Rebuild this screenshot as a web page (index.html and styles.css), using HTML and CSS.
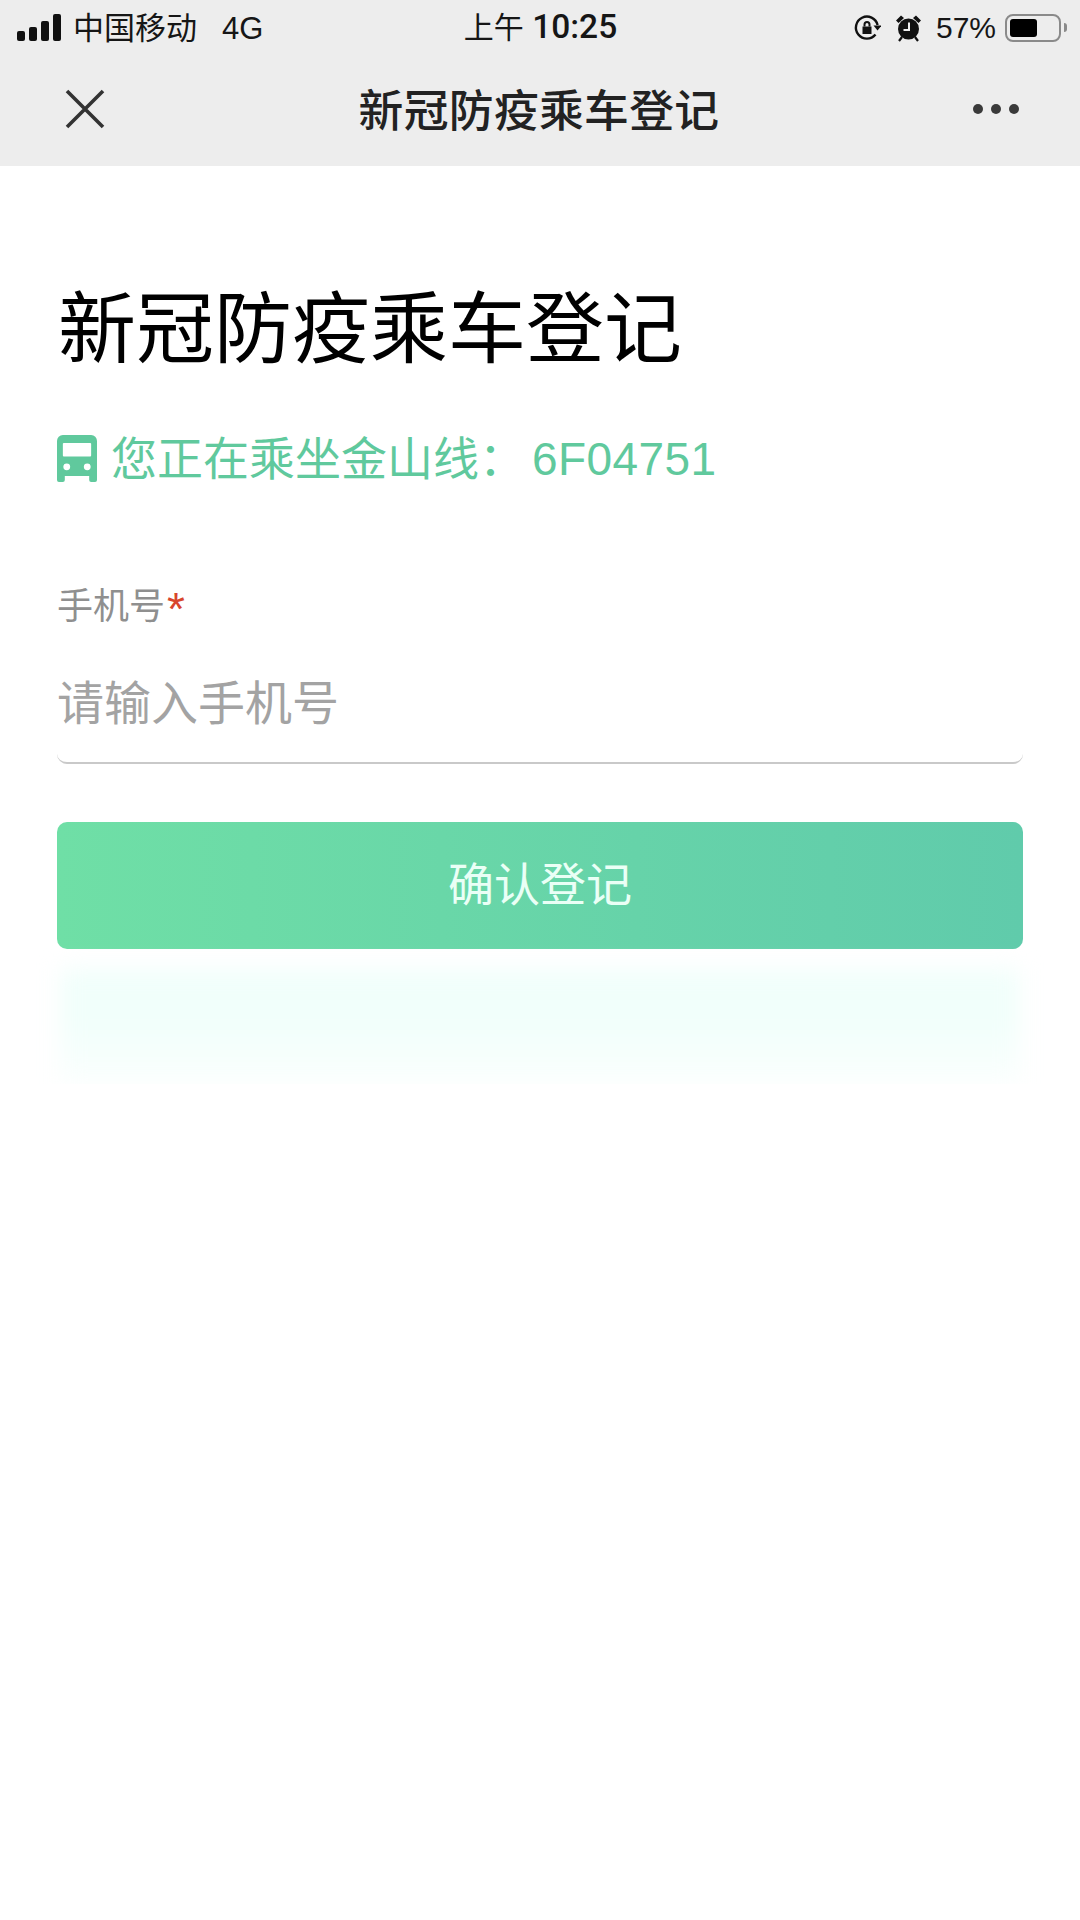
FILE: index.html
```html
<!DOCTYPE html>
<html lang="zh-CN">
<head>
  <meta charset="UTF-8">
  <meta name="viewport" content="width=device-width, initial-scale=1">
  <title>新冠防疫乘车登记</title>
  <link rel="stylesheet" href="styles.css">
</head>
<body>
  <header class="top">
    <div class="status">
      <div class="status-left">
        <div class="signal"><i></i><i></i><i></i><i></i></div>
        <div class="carrier">中国移动<span class="net">4G</span></div>
      </div>
      <div class="time">上午 <span class="clock">10:25</span></div>
      <div class="status-right">
        <svg class="ico-rotate" width="28" height="28" viewBox="0 0 28 28">
          <path d="M22.5 20.5A11 11 0 1 1 24.6 11" fill="none" stroke="#111" stroke-width="2.4"/>
          <path d="M20.5 11.5h8l-4 5z" fill="#111"/>
          <path d="M9.5 12.5h9v7.500h-9z" fill="#111"/>
          <path d="M11.500 12.500v-2a2.500 2.500 0 0 1 5 0v2" fill="none" stroke="#111" stroke-width="2"/>
        </svg>
        <svg class="ico-alarm" width="27" height="28" viewBox="0 0 27 28">
          <circle cx="13.500" cy="15" r="10.500" fill="#111"/>
          <path d="M1 6.500 6 1.500 9 4 3.500 9zM26 6.500 21 1.500 18 4 23.500 9z" fill="#111"/>
          <path d="M4 27l3-4M23 27l-3-4" stroke="#111" stroke-width="2.200"/>
          <path d="M14 8.500v7.500H8.500" fill="none" stroke="#eee" stroke-width="2"/>
        </svg>
        <span class="batt-text">57%</span>
        <div class="battery"><div class="battery-fill"></div></div>
        <div class="battery-cap"></div>
      </div>
    </div>
    <nav class="nav">
      <svg class="nav-close" width="40" height="40" viewBox="0 0 40 40">
        <path d="M2 2 38 38M38 2 2 38" stroke="#333" stroke-width="3.600"/>
      </svg>
      <div class="nav-title">新冠防疫乘车登记</div>
      <div class="nav-more"><i></i><i></i><i></i></div>
    </nav>
  </header>

  <main class="page">
    <h1 class="heading">新冠防疫乘车登记</h1>
    <div class="route">
      <svg class="bus" width="40" height="47" viewBox="0 0 41 48">
        <path fill-rule="evenodd" d="M6 0h29a6 6 0 0 1 6 6v40a2 2 0 0 1-2 2h-4a2 2 0 0 1-2-2v-4H8v4a2 2 0 0 1-2 2H2a2 2 0 0 1-2-2V6a6 6 0 0 1 6-6zM7 8a1 1 0 0 0-1 1v12a1 1 0 0 0 1 1h27a1 1 0 0 0 1-1V9a1 1 0 0 0-1-1zM10 29a3.500 3.500 0 1 0 0 7 3.500 3.500 0 0 0 0-7zM31 29a3.500 3.500 0 1 0 0 7 3.500 3.500 0 0 0 0-7z"/>
      </svg>
      <div class="route-text">您正在乘坐金山线：<span class="route-no">6F04751</span></div>
    </div>
    <form class="form">
      <label class="label" for="phone">手机号<span class="req">*</span></label>
      <input class="phone" id="phone" type="text" placeholder="请输入手机号">
      <button class="submit" type="button">确认登记</button>
      <div class="submit-glow"></div>
    </form>
  </main>
</body>
</html>
```

FILE: styles.css
```css
:root {
  --green: #60c99d;
  --bar: #ededed;
  --text: #161616;
}
* { box-sizing: border-box; margin: 0; padding: 0; }
body {
  background: #fff;
  font-family: 'Liberation Sans', 'Noto Sans CJK SC', sans-serif;
  color: var(--text);
}
.top { background: var(--bar); height: 166px; }
.status {
  display: grid;
  grid-template-columns: 1fr auto 1fr;
  align-items: center;
  height: 55px;
  padding: 0 13px 0 17px;
  font-size: 30px;
}
.status-left, .status-right { display: flex; align-items: center; }
.status-right { justify-content: flex-end; }
.signal { display: flex; align-items: flex-end; gap: 4px; height: 27px; }
.signal i { display: block; width: 8px; background: #111; border-radius: 2px; }
.signal i:nth-child(1) { height: 10px; }
.signal i:nth-child(2) { height: 14px; }
.signal i:nth-child(3) { height: 20px; }
.signal i:nth-child(4) { height: 27px; }
.carrier { margin: 0 0 5px 12px; font-size: 31px; }
.net { margin-left: 25px; font-size: 31px; }
.time { margin: 0 3px 6px 0; }
.clock { font-family: Roboto, 'Liberation Sans', sans-serif; font-size: 33.500px; font-weight: 500; }
.ico-rotate { margin-right: 14px; }
.ico-alarm { margin-right: 14px; }
.batt-text { margin-right: 9px; }
.battery {
  width: 56px;
  height: 28px;
  border: 2px solid #8a8a8a;
  border-radius: 8px;
  padding: 3px;
}
.battery-fill { width: 27px; height: 100%; background: #000; border-radius: 3px; }
.battery-cap {
  width: 3px;
  height: 9px;
  margin-left: 3px;
  background: #8a8a8a;
  border-radius: 0 3px 3px 0;
}
.nav {
  display: grid;
  grid-template-columns: 1fr auto 1fr;
  align-items: center;
  height: 111px;
  padding: 0 61px 4px 65px;
}
.nav-close { width: 40px; height: 40px; }
.nav-title {
  margin: 0 6px 2px 0;
  font-size: 44.800px;
  font-weight: 500;
  letter-spacing: .3px;
  color: #222;
}
.nav-more { display: flex; justify-content: flex-end; gap: 8px; }
.nav-more i { width: 10px; height: 10px; background: #3a3a3a; border-radius: 50%; }

.page { padding: 0 57px; }
.heading {
  margin-top: 114px;
  padding-left: 1px;
  font-size: 78px;
  font-weight: 400;
  line-height: 100px;
  color: #000;
}
.route {
  display: flex;
  align-items: center;
  margin-top: 54px;
  height: 48px;
  font-size: 46px;
  color: var(--green);
}
.bus { fill: var(--green); margin-right: 14px; flex: none; }
.route-text { margin-bottom: 7px; }
.route-no { margin-left: 7px; letter-spacing: .4px; }
.form { margin-top: 103px; }
.label { display: block; font-size: 36px; line-height: 44px; color: #8f8f8f; }
.req { margin-left: 2px; color: #d8452c; font-size: 46px; line-height: 0; vertical-align: -6px; }
.phone {
  display: block;
  width: 100%;
  height: 117px;
  margin-top: 18px;
  padding-bottom: 2px;
  border: none;
  border-bottom: 2px solid #c9c9c9;
  border-radius: 0 0 10px 10px;
  outline: none;
  background: none;
  font: inherit;
  font-size: 47px;
}
.phone::placeholder { color: #a3a3a3; opacity: 1; }
.submit {
  display: block;
  width: 100%;
  height: 127px;
  margin-top: 58px;
  padding-bottom: 10px;
  border: none;
  border-radius: 10px;
  background: linear-gradient(90deg, #6fdfa6, #60cbab);
  color: #eafff6;
  font: inherit;
  font-size: 46px;
}
.submit-glow {
  height: 115px;
  margin: 20px 4px 0;
  background: linear-gradient(#f1fffb 45%, #fbfffe);
  filter: blur(11px);
}
```
